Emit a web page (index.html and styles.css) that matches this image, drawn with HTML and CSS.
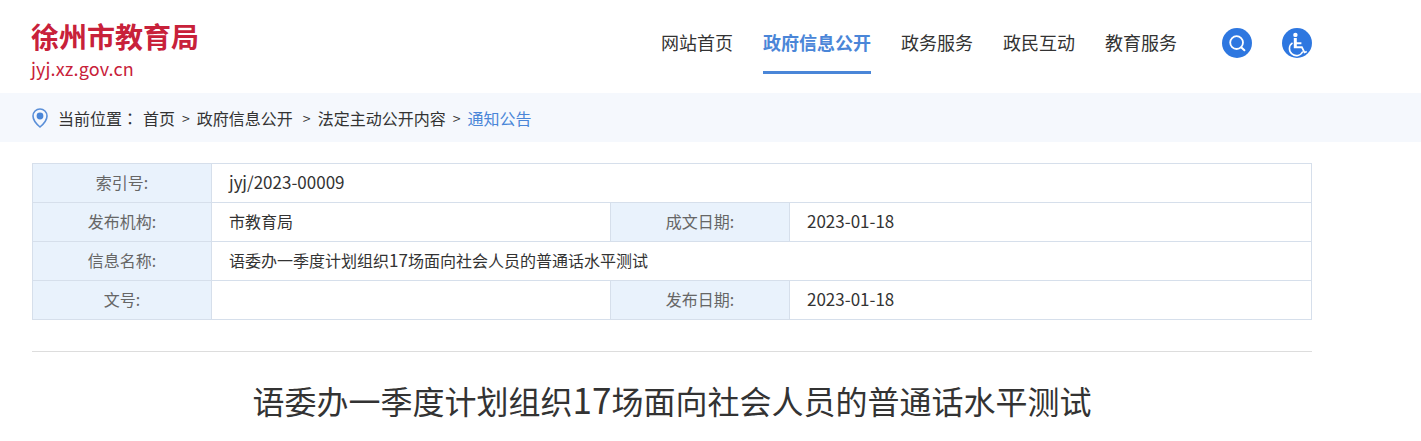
FILE: index.html
```html
<!DOCTYPE html>
<html lang="zh-CN">
<head>
  <meta charset="UTF-8">
  <title>语委办一季度计划组织17场面向社会人员的普通话水平测试</title>
  <link rel="stylesheet" href="styles.css">
</head>
<body>
  <header class="site-header">
    <div class="logo">
      <div class="logo-name">徐州市教育局</div>
      <div class="logo-url">jyj.xz.gov.cn</div>
    </div>
    <nav class="main-nav">
      <a href="#">网站首页</a>
      <a href="#" class="active">政府信息公开</a>
      <a href="#">政务服务</a>
      <a href="#">政民互动</a>
      <a href="#">教育服务</a>
    </nav>
    <div class="header-icons">
      <a href="#" class="round-icon">
        <svg viewBox="0 0 30 30" width="30" height="30"><circle cx="14.6" cy="14.6" r="6.4" fill="none" stroke="#fff" stroke-width="1.8"/><path d="M19.4 19.4l3 2.8" stroke="#fff" stroke-width="2" stroke-linecap="round"/></svg>
      </a>
      <a href="#" class="round-icon">
        <svg viewBox="0 0 30 30" width="30" height="30"><circle cx="13.4" cy="6.9" r="2.2" fill="#fff"/><path d="M11.8 10h3v4.2h4.600v2h-4.600v2h5.600l2.600 5.200 1.400-.6.7 1.500-3 1.300-2.700-5.400h-7.600z" fill="#fff"/><path d="M10.500 14.800a7 7 0 1 0 10.300 8.700" fill="none" stroke="#fff" stroke-width="1.600"/></svg>
      </a>
    </div>
  </header>

  <div class="crumbs">
    <svg class="pin" viewBox="0 0 16 20" width="16" height="20"><path d="M8 1a7 7 0 0 0-7 7c0 4 4 8.500 7 11 3-2.500 7-7 7-11a7 7 0 0 0-7-7z" fill="none" stroke="#5a8fd8" stroke-width="1.600"/><circle cx="8" cy="8" r="3.400" fill="#4a86d8"/></svg>
    <span class="crumb-label">当前位置<span class="colon" lang="zh-TW">：</span></span>
    <a href="#">首页</a>
    <span class="sep">&gt;</span>
    <a href="#">政府信息公开</a>
    <span class="sep sep-wide">&gt;</span>
    <a href="#">法定主动公开内容</a>
    <span class="sep">&gt;</span>
    <a href="#" class="current">通知公告</a>
  </div>

  <main class="content">
    <table class="info-table">
      <colgroup>
        <col class="col-label">
        <col class="col-value">
        <col class="col-label">
        <col>
      </colgroup>
      <tr>
        <th>索引号:</th>
        <td colspan="3"><span class="latin">jyj/2023-00009</span></td>
      </tr>
      <tr>
        <th>发布机构:</th>
        <td>市教育局</td>
        <th>成文日期:</th>
        <td><span class="latin">2023-01-18</span></td>
      </tr>
      <tr>
        <th>信息名称:</th>
        <td colspan="3">语委办一季度计划组织<span class="latin">17</span>场面向社会人员的普通话水平测试</td>
      </tr>
      <tr>
        <th>文号:</th>
        <td></td>
        <th>发布日期:</th>
        <td><span class="latin">2023-01-18</span></td>
      </tr>
    </table>

    <h1 class="article-title">语委办一季度计划组织<span class="title-num">17</span>场面向社会人员的普通话水平测试</h1>
  </main>
</body>
</html>
```

FILE: styles.css
```css
html, body {
  height: 441px;
  overflow: hidden;
}

body {
  margin: 0;
  background: #fff;
  color: #333;
  font-family: "Noto Sans CJK SC", "Noto Sans", sans-serif;
}

a {
  color: inherit;
  text-decoration: none;
}

/* header */
.site-header {
  display: flex;
  align-items: flex-start;
  height: 93px;
  padding: 0 109px 0 31px;
}

.logo {
  padding-top: 17px;
  color: #c8213a;
}

.logo-name {
  font-size: 28px;
  font-weight: 700;
  line-height: 38px;
}

.logo-url {
  font-size: 18px;
  line-height: 26px;
  letter-spacing: .15px;
}

.main-nav {
  display: flex;
  gap: 30px;
  margin-left: auto;
  font-size: 18px;
}

.main-nav a {
  height: 71px;
  line-height: 85px;
}

.main-nav .active {
  color: #4a86d8;
  font-weight: 700;
  border-bottom: 3px solid #4a86d8;
}

.header-icons {
  display: flex;
  gap: 30px;
  margin-left: 45px;
  padding-top: 28px;
}

.round-icon {
  display: block;
  width: 30px;
  height: 30px;
  border-radius: 50%;
  background: #2e77e0;
}

.round-icon svg {
  display: block;
}

/* breadcrumb */
.crumbs {
  display: flex;
  align-items: center;
  height: 49px;
  padding-left: 32px;
  background: #f5f8fd;
  font-size: 16px;
}

.pin {
  margin-right: 10px;
}

.crumb-label {
  margin-right: 5px;
}

/* TC cut centres the full-width colon */
.colon {
  font-family: "Noto Sans CJK TC", sans-serif;
}

.sep {
  margin: 0 7px;
  font-size: 14px;
}

.sep-wide {
  margin-left: 10px;
}

.current {
  color: #4a86d8;
}

/* info table */
.content {
  width: 1280px;
  margin: 21px 0 0 32px;
}

.info-table {
  width: 1280px;
  border-collapse: collapse;
  table-layout: fixed;
  font-size: 16px;
  line-height: 22px;
}

.col-label {
  width: 179px;
}

.col-value {
  width: 399px;
}

.info-table th,
.info-table td {
  height: 39px;
  padding: 0 0 2px;
  box-sizing: border-box;
  border: 1px solid #d6dfeb;
}

.info-table th {
  background: #e9f2fc;
  color: #666;
  font-weight: 400;
  text-align: center;
}

.info-table td {
  padding-left: 17px;
}

.latin {
  font-size: 17px;
}

.article-title {
  margin: 31px 0 0;
  padding-top: 26px;
  border-top: 1px solid #ddd;
  font-size: 32px;
  font-weight: 400;
  line-height: 42px;
  text-align: center;
}

.title-num {
  font-size: 35px;
}
```
